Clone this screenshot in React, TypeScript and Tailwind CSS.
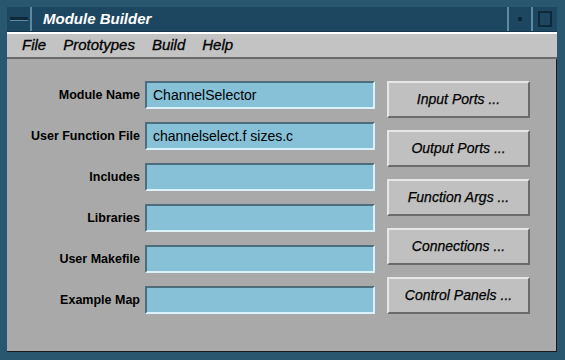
const fields = [
  { label: "Module Name", value: "ChannelSelector" },
  { label: "User Function File", value: "channelselect.f sizes.c" },
  { label: "Includes", value: "" },
  { label: "Libraries", value: "" },
  { label: "User Makefile", value: "" },
  { label: "Example Map", value: "" },
];

const actions = ["Input Ports ...", "Output Ports ...", "Function Args ...", "Connections ...", "Control Panels ..."];

const menus = ["File", "Prototypes", "Build", "Help"];

export default function App() {
  return (
    <div className="w-[565px] h-[360px] bg-[#2a5770] pt-[7px] pl-[7px] pr-[8px] pb-[8px] flex flex-col" style={{ fontFamily: '"Liberation Sans", Arial, sans-serif' }}>
      {/* title bar */}
      <div className="h-[25px] flex bg-[#1d4760] border-b border-[#14354a]">
        <div className="w-[25px] flex items-center justify-center border-r-2 border-[#5c8aa0]">
          <div className="w-[18px] h-[4px] bg-[#0e2a3a] border-b border-[#5c8aa0]" />
        </div>
        <div className="flex-1 flex items-center pl-[11px] text-white italic font-bold text-[15px]">Module Builder</div>
        <div className="w-[24px] flex items-center justify-center border-l-2 border-[#5c8aa0]">
          <div className="w-[4px] h-[4px] bg-[#0e2a3a]" />
        </div>
        <div className="w-[26px] flex items-center justify-center border-l-2 border-[#5c8aa0]">
          <div className="w-[14px] h-[16px] border-2 border-[#0e2a3a]" />
        </div>
      </div>
      {/* menu bar */}
      <div className="h-[27px] flex items-center gap-[17px] pl-[15px] bg-[#c3c3c3] border-t-2 border-white border-b-2 border-b-[#6a6a6a] text-[15px] italic text-black">
        {menus.map((m) => (
          <span key={m} className="[-webkit-text-stroke:0.3px_black]">{m}</span>
        ))}
      </div>
      {/* body */}
      <div className="flex-1 bg-[#a9a9a9] flex pt-[22px] border-r border-b border-[#1a1a1a]">
        <div className="flex flex-col gap-[13px]">
          {fields.map((f) => (
            <div key={f.label} className="h-[28px] flex items-center gap-[5px]">
              <div className="w-[133px] text-right font-bold text-[12.5px] text-black">{f.label}</div>
              <div className="w-[230px] h-[28px] bg-[#86c1d8] border-2 border-t-[#4d6c7c] border-l-[#4d6c7c] border-b-[#dcf2fa] border-r-[#dcf2fa] flex items-center pl-[6px] text-[14px] text-black">
                {f.value}
              </div>
            </div>
          ))}
        </div>
        <div className="flex flex-col gap-[12px] ml-[12px]">
          {actions.map((a) => (
            <div key={a} className="w-[143px] h-[37px] bg-[#c0c0c0] border-2 border-t-[#e6e6e6] border-l-[#e6e6e6] border-b-[#6b6b6b] border-r-[#6b6b6b] flex items-center justify-center italic text-[14px] text-black [-webkit-text-stroke:0.25px_black]">
              {a}
            </div>
          ))}
        </div>
      </div>
    </div>
  );
}
